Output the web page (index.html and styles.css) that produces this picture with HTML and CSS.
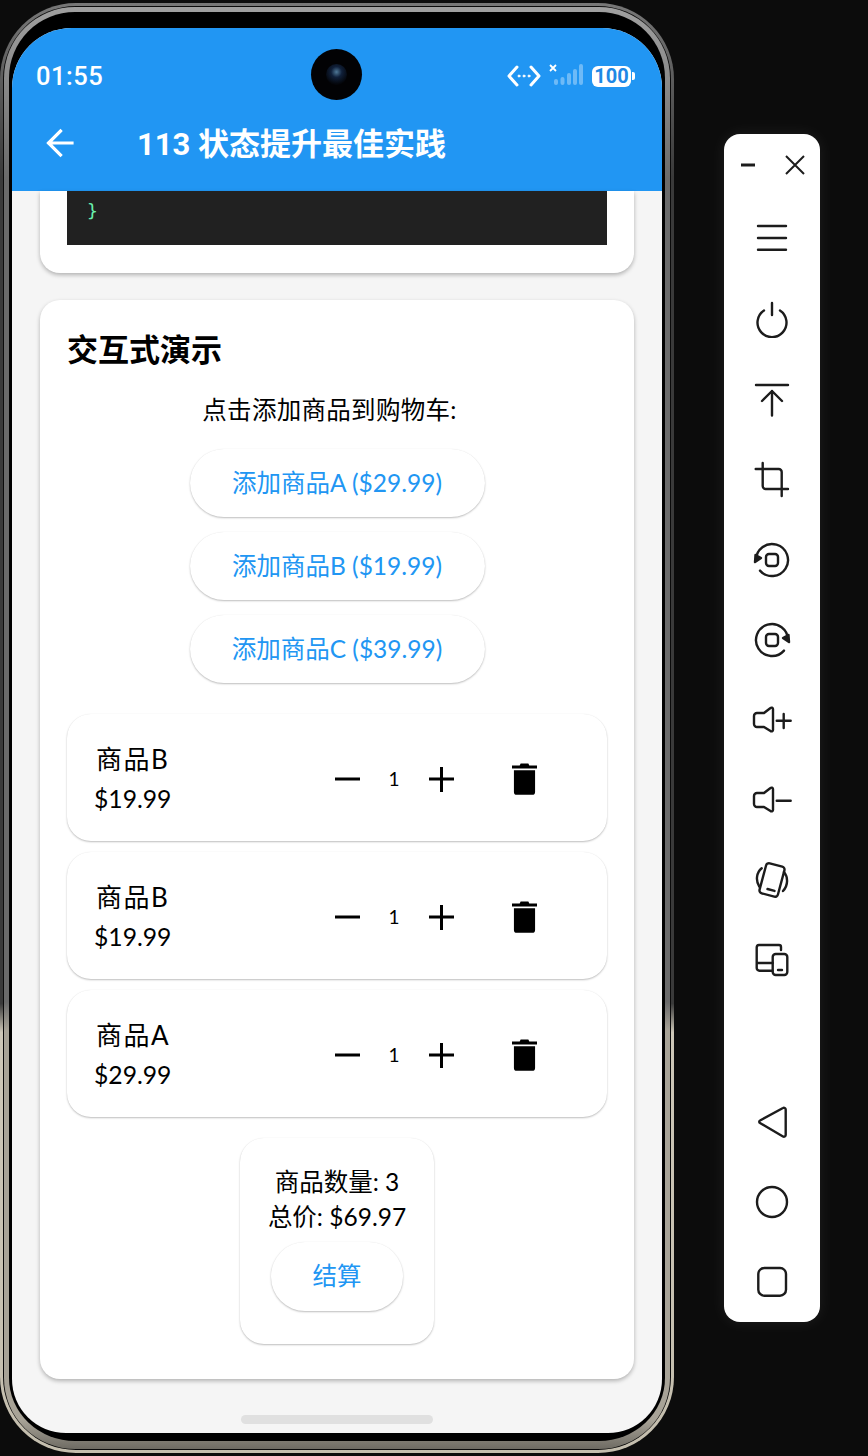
FILE: index.html
```html
<!DOCTYPE html>
<html lang="en">
<head>
  <meta charset="UTF-8">
  <title>113 状态提升最佳实践</title>
  <link rel="stylesheet" href="styles.css">
</head>
<body>
<div class="phone">
  <div class="bezel">
  <div class="screen">
    <div class="camera"><div class="lens"></div></div>
    <header class="app-header">
      <div class="status-bar">
        <span class="clock">01:55</span>
        <div class="status-icons">
          <svg width="34" height="22" viewBox="0 0 34 22" fill="none" stroke="#fff" stroke-width="3" stroke-linecap="round" stroke-linejoin="round">
            <path d="M10 2 2 11l8 9M24 2l8 9-8 9"/>
            <circle cx="12" cy="11" r="1" fill="#fff" stroke-width="1"/><circle cx="17" cy="11" r="1" fill="#fff" stroke-width="1"/><circle cx="22" cy="11" r="1" fill="#fff" stroke-width="1"/>
          </svg>
          <svg class="ic-signal" width="37" height="24" viewBox="0 0 37 24">
            <path d="M2 2l6 6M8 2 2 8" stroke="#fff" stroke-width="1.800" fill="none"/>
            <g fill="#fff" fill-opacity=".35">
              <rect x="6" y="16" width="4" height="6" rx="2"/><rect x="12.500" y="14" width="4" height="8" rx="2"/><rect x="19" y="10" width="4" height="12" rx="2"/><rect x="25" y="6" width="4" height="16" rx="2"/><rect x="31" y="1" width="4" height="21" rx="2"/>
            </g>
          </svg>
          <div class="battery"><span class="battery-level">100</span><span class="battery-tip"></span></div>
        </div>
      </div>
      <div class="toolbar-row">
        <svg class="back" width="30" height="30" viewBox="0 0 30 30" fill="none" stroke="#fff" stroke-width="3.200" stroke-linecap="square"><path d="M27 15H4M15.500 3 3.500 15l12 12"/></svg>
        <h1 class="app-title">113 状态提升最佳实践</h1>
      </div>
    </header>

    <main class="content">
      <section class="card card-prev">
        <pre class="code">}</pre>
      </section>

      <section class="card card-demo">
        <h2 class="demo-title">交互式演示</h2>
        <p class="demo-hint">点击添加商品到购物车:</p>
        <div class="add-list">
          <button class="pill pill-add">添加商品A ($29.99)</button>
          <button class="pill pill-add">添加商品B ($19.99)</button>
          <button class="pill pill-add">添加商品C ($39.99)</button>
        </div>

        <div class="cart-list">
          <div class="cart-item">
            <div class="item-info"><div class="item-name">商品B</div><div class="item-price">$19.99</div></div>
            <div class="qty">
              <svg width="28" height="28" viewBox="0 0 28 28"><path d="M2 14h25" stroke="#000" stroke-width="3"/></svg>
              <span class="qty-num">1</span>
              <svg width="28" height="28" viewBox="0 0 28 28"><path d="M2 14h25M14.500 2v25" stroke="#000" stroke-width="3"/></svg>
            </div>
            <svg class="trash" width="25" height="34" viewBox="0 0 26 34"><path d="M9 1h8l1 2h8v3H0V3h8zM2 8h22v22.500a3 3 0 0 1-3 3H5a3 3 0 0 1-3-3z"/></svg>
          </div>
          <div class="cart-item">
            <div class="item-info"><div class="item-name">商品B</div><div class="item-price">$19.99</div></div>
            <div class="qty">
              <svg width="28" height="28" viewBox="0 0 28 28"><path d="M2 14h25" stroke="#000" stroke-width="3"/></svg>
              <span class="qty-num">1</span>
              <svg width="28" height="28" viewBox="0 0 28 28"><path d="M2 14h25M14.500 2v25" stroke="#000" stroke-width="3"/></svg>
            </div>
            <svg class="trash" width="25" height="34" viewBox="0 0 26 34"><path d="M9 1h8l1 2h8v3H0V3h8zM2 8h22v22.500a3 3 0 0 1-3 3H5a3 3 0 0 1-3-3z"/></svg>
          </div>
          <div class="cart-item">
            <div class="item-info"><div class="item-name">商品A</div><div class="item-price">$29.99</div></div>
            <div class="qty">
              <svg width="28" height="28" viewBox="0 0 28 28"><path d="M2 14h25" stroke="#000" stroke-width="3"/></svg>
              <span class="qty-num">1</span>
              <svg width="28" height="28" viewBox="0 0 28 28"><path d="M2 14h25M14.500 2v25" stroke="#000" stroke-width="3"/></svg>
            </div>
            <svg class="trash" width="25" height="34" viewBox="0 0 26 34"><path d="M9 1h8l1 2h8v3H0V3h8zM2 8h22v22.500a3 3 0 0 1-3 3H5a3 3 0 0 1-3-3z"/></svg>
          </div>
        </div>

        <div class="summary">
          <div class="summary-line">商品数量: 3</div>
          <div class="summary-line">总价: $69.97</div>
          <button class="pill pill-checkout">结算</button>
        </div>
      </section>
    </main>
    <div class="home-bar"></div>
  </div>
  </div>
</div>

<aside class="side-bar">
  <div class="side-top">
    <svg width="18" height="18" viewBox="0 0 18 18"><path d="M2 9h14" stroke="#1c1c1c" stroke-width="3"/></svg>
    <svg width="22" height="22" viewBox="0 0 22 22"><path d="M2 2l18 18M20 2 2 20" stroke="#1c1c1c" stroke-width="2"/></svg>
  </div>
  <div class="side-main">
    <div class="side-btn"><svg width="40" height="40" viewBox="0 0 40 40" class="side-ic"><path d="M6 8h28M6 20h28M6 31.700h28"/></svg></div>
    <div class="side-btn"><svg width="40" height="40" viewBox="0 0 40 40" class="side-ic"><path d="M12 12.500a14.500 14.500 0 1 0 16 0M20 5v12"/></svg></div>
    <div class="side-btn"><svg width="40" height="40" viewBox="0 0 40 40" class="side-ic"><path d="M4 7h32M20 37.500V13M10 23l10-10 10 10"/></svg></div>
    <div class="side-btn"><svg width="40" height="40" viewBox="0 0 40 40" class="side-ic"><path d="M10.700 5v23a3 3 0 0 0 3 3H36M3.700 11h23a3 3 0 0 1 3 3v24"/></svg></div>
    <div class="side-btn"><svg width="40" height="40" viewBox="0 0 40 40" class="side-ic"><path d="M4 22A16 16 0 1 1 8 32.600"/><path d="M3 24l.5-7 5.500 3z" class="solid"/><rect x="14" y="16" width="12" height="12" rx="3"/></svg></div>
    <div class="side-btn"><svg width="40" height="40" viewBox="0 0 40 40" class="side-ic"><path d="M36 22A16 16 0 1 0 32 32.600"/><path d="M37 24l-.5-7-5.500 3z" class="solid"/><rect x="14" y="16" width="12" height="12" rx="3"/></svg></div>
    <div class="side-btn"><svg width="40" height="40" viewBox="0 0 40 40" class="side-ic"><path d="M21 11v21a1.500 1.500 0 0 1-2.500 1L12 29H5a3 3 0 0 1-3-3v-8a3 3 0 0 1 3-3h7l6.500-5a1.500 1.500 0 0 1 2.500 1zM24.700 22.700h14M31.700 16v14"/></svg></div>
    <div class="side-btn"><svg width="40" height="40" viewBox="0 0 40 40" class="side-ic"><path d="M21 11v21a1.500 1.500 0 0 1-2.500 1L12 29H5a3 3 0 0 1-3-3v-8a3 3 0 0 1 3-3h7l6.500-5a1.500 1.500 0 0 1 2.500 1zM24.700 22.700h14"/></svg></div>
    <div class="side-btn"><svg width="40" height="40" viewBox="0 0 40 40" class="side-ic"><rect x="10.500" y="6.500" width="19" height="31" rx="3" transform="rotate(15 20 22)"/><path d="M15.500 31l7 1.900M9.700 10.300c-5 4-6.500 12-2.400 18.400M32 14c4 5 4.500 13-1 19"/></svg></div>
    <div class="side-btn"><svg width="40" height="40" viewBox="0 0 40 40" class="side-ic"><path d="M29 12V9a2 2 0 0 0-2-2H7a2.500 2.500 0 0 0-2.300 2.500V30a2.700 2.700 0 0 0 2.700 2.700h13M4.700 25h16"/><rect x="20.700" y="16" width="14.600" height="21" rx="3"/><path d="M26 32h4"/></svg></div>
  </div>
  <div class="side-nav">
    <div class="side-btn"><svg width="40" height="40" viewBox="0 0 40 40" class="side-ic"><path d="M8 20.500 31 8a1.800 1.800 0 0 1 2.700 1.500V35a1.800 1.800 0 0 1-2.700 1.500L8 23a1.400 1.400 0 0 1 0-2.500z"/></svg></div>
    <div class="side-btn"><svg width="40" height="40" viewBox="0 0 40 40" class="side-ic"><circle cx="20" cy="22" r="15"/></svg></div>
    <div class="side-btn"><svg width="40" height="40" viewBox="0 0 40 40" class="side-ic"><rect x="6.300" y="8" width="27.700" height="27.700" rx="6"/></svg></div>
  </div>
</aside>
</body>
</html>
```

FILE: styles.css
```css
* {
  box-sizing: border-box;
}
html, body {
  margin: 0;
  height: 1456px;
  overflow: hidden;
}
body {
  display: flex;
  align-items: flex-start;
  background: #0c0c0c;
  font-family: "Lato", "Noto Sans CJK SC", sans-serif;
  color: #000;
}

/* phone */
.phone {
  flex: none;
  width: 674px;
  height: 1450px;
  margin-top: 3px;
  padding: 1px;
  border: 3px solid transparent;
  border-radius: 76px;
  background:
    linear-gradient(#0a0a0a, #0a0a0a) padding-box,
    linear-gradient(180deg, #777 0, #3a3a3a 12%, #3a3a3a 69%, #cdc7b8 71%, #c4beae 100%) border-box;
}
.bezel {
  height: 100%;
  padding: 16px 3px 4px;
  border: 5px solid transparent;
  border-bottom-width: 8px;
  border-radius: 71px;
  background:
    linear-gradient(#000, #000) padding-box,
    linear-gradient(180deg, #a0a0a0 0, #6a6a6a 12%, #6a6a6a 69%, #a8a397 71%, #a8a397 98%, #6e6b63 100%) border-box;
}
.screen {
  position: relative;
  height: 1405px;
  border-radius: 60px 60px 54px 54px;
  overflow: hidden;
  background: #f5f5f5;
  display: flex;
  flex-direction: column;
}
.camera {
  position: absolute;
  left: 299px;
  top: 21px;
  width: 51px;
  height: 51px;
  border-radius: 50%;
  background: #020204;
  display: flex;
  align-items: center;
  justify-content: center;
}
.lens {
  width: 21px;
  height: 21px;
  border-radius: 50%;
  background: radial-gradient(circle at 50% 38%, #4f7897 0, #10203a 32%, #04060b 72%);
}

/* app bar */
.app-header {
  flex: none;
  height: 163px;
  background: #2196f3;
  color: #fff;
}
.status-bar {
  height: 96px;
  padding: 0 27px 0 24px;
  display: flex;
  align-items: center;
  justify-content: space-between;
}
.clock {
  font-family: "Roboto", sans-serif;
  font-size: 25.500px;
  font-weight: 500;
  letter-spacing: .5px;
}
.status-icons {
  display: flex;
  align-items: center;
}
.ic-signal {
  margin: -2px 7px 0 7px;
}
.battery {
  display: flex;
  align-items: center;
  gap: 1px;
}
.battery-level {
  width: 39px;
  height: 21px;
  border-radius: 6px;
  background: #fff;
  color: #1e88e5;
  font-family: "Roboto", sans-serif;
  font-size: 20px;
  font-weight: 700;
  line-height: 21px;
  text-align: center;
}
.battery-tip {
  width: 3px;
  height: 8px;
  border-radius: 0 2px 2px 0;
  background: #fff;
}
.toolbar-row {
  height: 35px;
  padding-left: 33px;
  display: flex;
  align-items: center;
}
.back {
  margin-top: 2px;
}
.app-title {
  margin: 0 0 0 62px;
  font-family: "Roboto", "Noto Sans CJK SC", sans-serif;
  font-size: 31px;
  font-weight: 700;
  white-space: nowrap;
}

/* content */
.content {
  flex: 1;
  padding: 0 28px;
  display: flex;
  flex-direction: column;
  gap: 27px;
}
.card {
  background: #fff;
  border-radius: 20px;
  box-shadow: 0 2px 4px rgba(0, 0, 0, .28);
}
.card-prev {
  height: 82px;
  border-radius: 0 0 20px 20px;
  padding: 0 27px;
}
.code {
  margin: 0;
  height: 54px;
  padding: 6px 20px;
  background: #212121;
  color: #69f0ae;
  font-family: "DejaVu Sans Mono", monospace;
  font-size: 18px;
  line-height: 28px;
}
.card-demo {
  height: 1079px;
  padding: 27px;
}
.demo-title {
  margin: 0;
  font-size: 31px;
  font-weight: 700;
  font-family: "Noto Sans CJK SC", sans-serif;
  line-height: 42px;
}
.demo-hint {
  margin: 24px 0 22px;
  padding-right: 15px;
  text-align: center;
  font-size: 24.500px;
  line-height: 34px;
  letter-spacing: .3px;
}

/* buttons */
.pill {
  padding: 0 0 4px;
  border: 0;
  border-radius: 34px;
  background: #fff;
  color: #2196f3;
  font-family: inherit;
  font-size: 24.500px;
  box-shadow: 0 1px 2px rgba(0, 0, 0, .26), 0 0 1px rgba(0, 0, 0, .06);
}
.add-list {
  display: flex;
  flex-direction: column;
  align-items: center;
  gap: 15px;
}
.pill-add {
  width: 295px;
  height: 68px;
}

/* cart */
.cart-list {
  margin-top: 31px;
  display: flex;
  flex-direction: column;
  gap: 11px;
}
.cart-item {
  height: 127px;
  padding: 0 0 0 27px;
  border-radius: 24px;
  background: #fff;
  box-shadow: 0 1px 2px rgba(0, 0, 0, .26), 0 0 1px rgba(0, 0, 0, .06);
  display: flex;
  align-items: center;
}
.item-info {
  width: 76px;
  padding-top: 2px;
  white-space: nowrap;
}
.item-name {
  margin-left: 2px;
  font-size: 26px;
  line-height: 40px;
  letter-spacing: 1.500px;
}
.item-price {
  font-size: 24.700px;
  line-height: 40px;
}
.qty {
  margin: 2px 0 0 163px;
  display: flex;
  align-items: center;
}
.qty-num {
  width: 66px;
  text-align: center;
  font-size: 19px;
}
.trash {
  margin: 2px 0 0 57px;
  flex: none;
}

/* summary */
.summary {
  width: 194px;
  height: 206px;
  margin: 21px auto 0;
  padding-top: 26px;
  border-radius: 24px;
  background: #fff;
  box-shadow: 0 1px 2px rgba(0, 0, 0, .26), 0 0 1px rgba(0, 0, 0, .06);
  display: flex;
  flex-direction: column;
  align-items: center;
}
.summary-line {
  font-size: 24.500px;
  line-height: 35px;
  white-space: nowrap;
}
.pill-checkout {
  width: 132px;
  height: 69px;
  margin-top: 8px;
}
.home-bar {
  position: absolute;
  left: 229px;
  bottom: 9px;
  width: 192px;
  height: 9px;
  border-radius: 5px;
  background: #e0e0e0;
}

/* emulator side bar */
.side-bar {
  flex: none;
  width: 96px;
  height: 1188px;
  margin: 134px 0 0 50px;
  border-radius: 16px;
  background: #fff;
  box-shadow: 0 0 16px rgba(255, 255, 255, .08);
}
.side-top {
  height: 64px;
  padding: 0 14px 3px 15px;
  display: flex;
  align-items: center;
  justify-content: space-between;
}
.side-btn {
  height: 80px;
  display: flex;
  align-items: center;
  justify-content: center;
}
.side-ic {
  fill: none;
  stroke: #1c1c1c;
  stroke-width: 2.400;
  stroke-linecap: round;
  stroke-linejoin: round;
}
.side-ic .solid {
  fill: #1c1c1c;
}
.side-nav {
  margin-top: 82px;
}
```
